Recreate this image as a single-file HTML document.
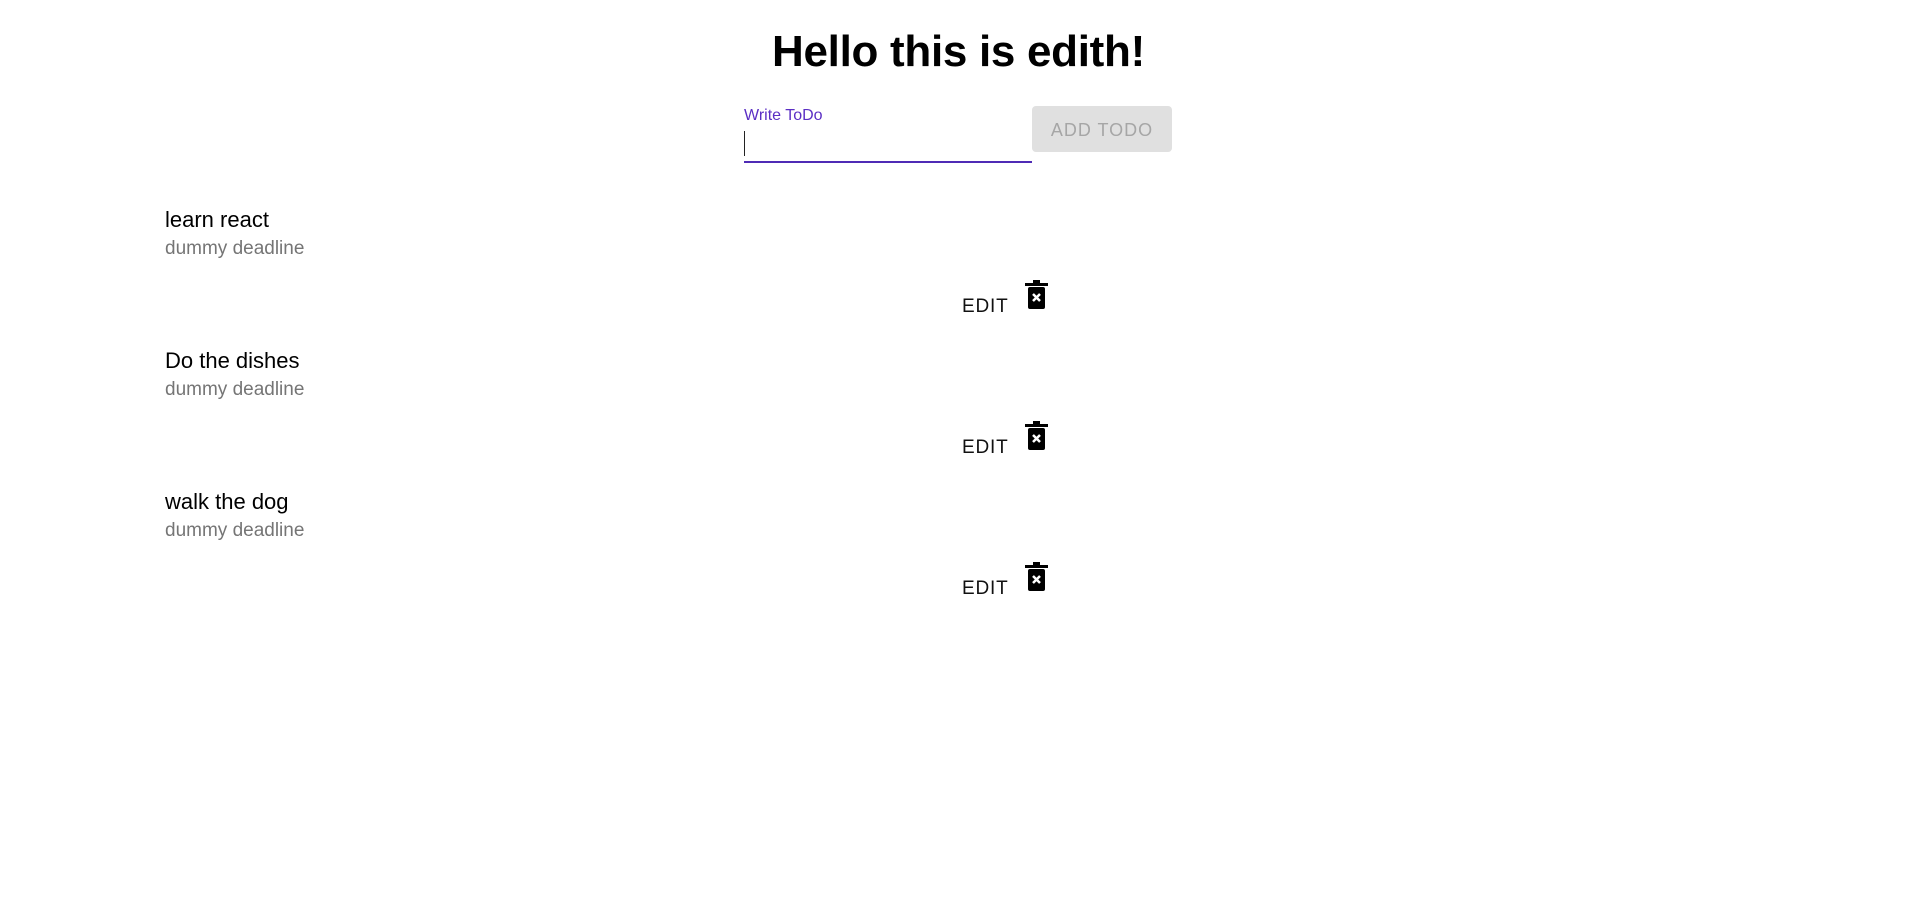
<!DOCTYPE html>
<html><head><meta charset="utf-8"><style>
body{margin:0;width:1917px;height:913px;background:#fff;position:relative;font-family:"Liberation Sans",sans-serif;overflow:hidden}
.a{position:absolute;white-space:nowrap}
h1{position:absolute;left:0;width:1917px;text-align:center;top:27px;margin:0;font-size:44px;font-weight:bold;letter-spacing:-0.3px;color:#000}
.t{font-size:22px;color:#000}
.d{font-size:19px;color:#757575}
.e{font-size:19px;color:#111;letter-spacing:0.8px}
</style></head><body>
<h1>Hello this is edith!</h1>
<div class="a" style="left:744px;top:107px;font-size:16px;color:#5b2fc4">Write ToDo</div>
<div class="a" style="left:744px;top:131px;width:1px;height:25px;background:#222"></div>
<div class="a" style="left:744px;top:161px;width:288px;height:2px;background:#4f2bb5"></div>
<div class="a" style="left:1032px;top:106px;width:140px;height:46px;background:#e0e0e0;border-radius:4px;color:#a6a6a6;font-size:18px;letter-spacing:1px;text-align:center;line-height:48px">ADD TODO</div>

<div class="a t" style="left:165px;top:207px">learn react</div>
<div class="a d" style="left:165px;top:238px">dummy deadline</div>
<div class="a e" style="left:962px;top:296px">EDIT</div>
<svg class="a" style="left:1025px;top:280px" width="24" height="30" viewBox="0 0 24 30"><rect x="8" y="0" width="7" height="3" fill="#000"/><rect x="0" y="3" width="23" height="3" fill="#000"/><rect x="3" y="7" width="17" height="22" rx="2" fill="#000"/><path d="M8 14l7 7M15 14l-7 7" stroke="#fff" stroke-width="2.5"/></svg>

<div class="a t" style="left:165px;top:348px">Do the dishes</div>
<div class="a d" style="left:165px;top:379px">dummy deadline</div>
<div class="a e" style="left:962px;top:437px">EDIT</div>
<svg class="a" style="left:1025px;top:421px" width="24" height="30" viewBox="0 0 24 30"><rect x="8" y="0" width="7" height="3" fill="#000"/><rect x="0" y="3" width="23" height="3" fill="#000"/><rect x="3" y="7" width="17" height="22" rx="2" fill="#000"/><path d="M8 14l7 7M15 14l-7 7" stroke="#fff" stroke-width="2.5"/></svg>

<div class="a t" style="left:165px;top:489px">walk the dog</div>
<div class="a d" style="left:165px;top:520px">dummy deadline</div>
<div class="a e" style="left:962px;top:578px">EDIT</div>
<svg class="a" style="left:1025px;top:562px" width="24" height="30" viewBox="0 0 24 30"><rect x="8" y="0" width="7" height="3" fill="#000"/><rect x="0" y="3" width="23" height="3" fill="#000"/><rect x="3" y="7" width="17" height="22" rx="2" fill="#000"/><path d="M8 14l7 7M15 14l-7 7" stroke="#fff" stroke-width="2.5"/></svg>
</body></html>
